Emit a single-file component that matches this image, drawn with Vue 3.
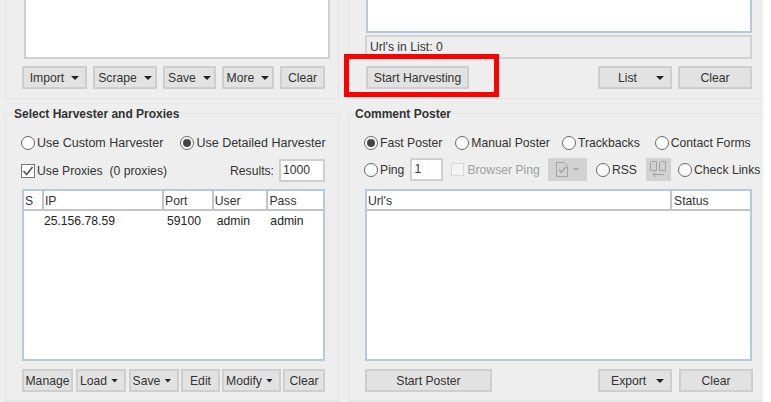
<template>
  <div class="screen">
    <div class="columns">
      <div class="col left">
        <section class="panel top-panel">
          <div class="list-box import-box"></div>
          <div class="btn-row import-row">
            <button v-for="b in importButtons" :key="b.label" class="btn" :style="{ width: b.width + 'px' }">
              <span>{{ b.label }}</span><i v-if="b.menu" class="caret"></i>
            </button>
          </div>
        </section>
        <section class="panel titled">
          <h4>Select Harvester and Proxies</h4>
          <div class="row radios-left">
            <label class="radio"><i class="dot"></i>Use Custom Harvester</label>
            <label class="radio"><i class="dot on"></i>Use Detailed Harvester</label>
          </div>
          <div class="row proxies-row">
            <label class="radio">
              <svg class="check" width="14" height="14" viewBox="0 0 14 14">
                <rect x="0.5" y="0.5" width="13" height="13" fill="#fff" stroke="#777" />
                <path d="M2.5 7 L5.7 10.5 L11.5 3" fill="none" stroke="#555" stroke-width="1.6" />
              </svg>
              Use Proxies&nbsp; (0 proxies)
            </label>
            <span class="results">Results:<span class="field wide">1000</span></span>
          </div>
          <div class="table proxies">
            <div class="thead">
              <span v-for="c in proxyCols" :key="c.name" :style="{ width: c.width + 'px' }">{{ c.name }}</span>
            </div>
            <div class="trow">
              <span v-for="c in proxyCols" :key="c.name" :style="{ width: c.width + 'px' }">{{ c.value }}</span>
            </div>
          </div>
          <div class="btn-row proxy-buttons">
            <button
              v-for="b in proxyButtons"
              :key="b.label"
              class="btn tight"
              :class="{ 'has-menu': b.menu }"
              :style="{ width: b.width + 'px' }"
            >
              <span>{{ b.label }}</span><i v-if="b.menu" class="caret-small"></i>
            </button>
          </div>
        </section>
      </div>

      <div class="col right">
        <section class="panel top-panel">
          <div class="list-box urls-box"></div>
          <div class="count-box">Url's in List: 0</div>
          <div class="btn-row harvest-row">
            <button class="btn harvest">Start Harvesting</button>
            <div class="push"></div>
            <button class="btn menu-btn list-btn"><span>List</span><i class="caret"></i></button>
            <button class="btn wide-clear">Clear</button>
          </div>
        </section>
        <section class="panel titled">
          <h4>Comment Poster</h4>
          <div class="row poster-modes">
            <label class="radio fast"><i class="dot on"></i>Fast Poster</label>
            <label class="radio"><i class="dot"></i>Manual Poster</label>
            <label class="radio"><i class="dot"></i>Trackbacks</label>
            <label class="radio contact"><i class="dot"></i>Contact Forms</label>
          </div>
          <div class="row ping-row">
            <label class="radio ping"><i class="dot"></i>Ping</label>
            <span class="field ping-field">1</span>
            <label class="radio disabled"><i class="box"></i>Browser Ping</label>
            <span class="icon-btn doc-btn">
              <svg width="12" height="15" viewBox="0 0 12 15">
                <path d="M0.5 0.5 H8 L11.5 4 V14.5 H0.5 Z" fill="none" stroke="#a3a3a3" />
                <path d="M3 7.5 L5.5 10.5 L10 4.5" fill="none" stroke="#a3a3a3" stroke-width="1.3" />
              </svg>
              <i class="caret pale"></i>
            </span>
            <label class="radio"><i class="dot"></i>RSS</label>
            <span class="icon-btn swap-btn">
              <svg width="16" height="17" viewBox="0 0 16 17">
                <path d="M0.5 9.5 V2 L2 0.5 H6.5 V9.5 Z M9.5 9.5 V2 L11 0.5 H15.5 V9.5 Z" fill="none" stroke="#a3a3a3" />
                <path d="M14 13.5 H3 M5.5 11 L3 13.5 L5.5 16" fill="none" stroke="#a3a3a3" />
              </svg>
            </span>
            <label class="radio"><i class="dot"></i>Check Links</label>
          </div>
          <div class="table urls">
            <div class="thead">
              <span class="url-col">Url's</span>
              <span class="status-col">Status</span>
            </div>
          </div>
          <div class="btn-row poster-buttons">
            <button class="btn start-poster">Start Poster</button>
            <div class="push"></div>
            <button class="btn menu-btn"><span>Export</span><i class="caret"></i></button>
            <button class="btn wide-clear">Clear</button>
          </div>
        </section>
      </div>
    </div>
    <div class="highlight"></div>
  </div>
</template>

<script setup>
const importButtons = [
  { label: 'Import', width: 65, menu: true },
  { label: 'Scrape', width: 64, menu: true },
  { label: 'Save', width: 53, menu: true },
  { label: 'More', width: 52, menu: true },
  { label: 'Clear', width: 45 },
]

const proxyButtons = [
  { label: 'Manage', width: 51 },
  { label: 'Load', width: 50, menu: true },
  { label: 'Save', width: 50, menu: true },
  { label: 'Edit', width: 39 },
  { label: 'Modify', width: 59, menu: true },
  { label: 'Clear', width: 42 },
]

const proxyCols = [
  { name: 'S', value: '', width: 20 },
  { name: 'IP', value: '25.156.78.59', width: 121 },
  { name: 'Port', value: '59100', width: 50 },
  { name: 'User', value: 'admin', width: 55 },
  { name: 'Pass', value: 'admin', width: 55 },
]
</script>

<style scoped>
.screen {
  position: relative;
  width: 771px;
  height: 402px;
  overflow: hidden;
  background: #fff;
  font-family: "Liberation Sans", Arial, sans-serif;
  font-size: 12.2px;
  color: #333;
}
.columns {
  display: flex;
  width: 763px;
  height: 402px;
  padding-left: 5px;
  box-sizing: border-box;
  background: #eeeeee;
}
.col {
  display: flex;
  flex-direction: column;
}
.left {
  width: 334px;
  margin-right: 9px;
}
.right {
  width: 415px;
}
.panel {
  border: 1px solid #e4e4e4;
  box-sizing: border-box;
}
.right .panel {
  border-right: 0;
}
.top-panel {
  height: 99px;
  border-top: 0;
  flex: none;
}
.titled {
  position: relative;
  margin-top: 14px;
  height: 288px;
}
h4 {
  position: absolute;
  top: -7px;
  left: 7px;
  margin: 0;
  padding: 0 1px;
  background: #eeeeee;
  font-size: 12px;
  line-height: 14px;
  font-weight: bold;
  color: #333;
}
.right h4 {
  left: 5px;
}
.list-box {
  background: #fff;
  box-sizing: border-box;
  border: 2px solid #d0d0d0;
  border-top: 0;
}
.import-box {
  width: 306px;
  height: 59px;
  margin-left: 18px;
}
.urls-box {
  width: 386px;
  height: 33px;
  margin-left: 17px;
  border-color: #b7c9de;
}
.count-box {
  width: 387px;
  height: 24px;
  margin: 2px 0 0 16px;
  padding-left: 3px;
  box-sizing: border-box;
  border: 2px solid #d2d2d2;
  line-height: 20px;
}
.btn-row {
  display: flex;
}
.import-row {
  gap: 6px;
  margin: 7px 0 0 16px;
}
.harvest-row {
  gap: 6px;
  margin: 7px 0 0 17px;
  width: 386px;
}
.push {
  flex: 1;
}
.btn {
  display: flex;
  align-items: center;
  justify-content: center;
  gap: 7px;
  height: 23px;
  padding: 0;
  box-sizing: border-box;
  border: 2px solid #cecece;
  background: #e2e2e2;
  font: inherit;
  color: #333;
}
.btn.tight {
  gap: 4px;
}
.btn.has-menu {
  padding-right: 4px;
}
.harvest {
  width: 103px;
}
.menu-btn {
  justify-content: space-between;
  width: 74px;
  padding: 0 6px 0 11px;
}
.list-btn {
  padding-left: 18px;
}
.wide-clear {
  width: 74px;
}
.caret {
  display: block;
  width: 0;
  height: 0;
  border-left: 4px solid transparent;
  border-right: 4px solid transparent;
  border-top: 4px solid #222;
}
.caret-small {
  display: block;
  width: 7px;
  height: 4px;
  background: #222;
  clip-path: polygon(0 0, 100% 0, 50% 100%);
}
.caret.pale {
  border-left-width: 3px;
  border-right-width: 3px;
  border-top: 3px solid #a8a8a8;
}
.row {
  display: flex;
  align-items: center;
}
.radio {
  display: flex;
  align-items: center;
  gap: 2px;
  white-space: nowrap;
}
.radio.disabled {
  color: #a0a0a0;
  gap: 3px;
}
.dot {
  display: block;
  position: relative;
  width: 14px;
  height: 14px;
  box-sizing: border-box;
  border: 1px solid #666;
  border-radius: 50%;
  background: #fff;
}
.dot.on::after {
  content: "";
  position: absolute;
  left: 2px;
  top: 2px;
  width: 8px;
  height: 8px;
  border-radius: 50%;
  background: #444;
}
.box {
  display: block;
  width: 13px;
  height: 13px;
  box-sizing: border-box;
  border: 1px solid #d8d8d8;
  background: #f4f4f4;
}
.check {
  display: block;
}
.radios-left {
  gap: 17px;
  margin: 22px 0 0 15px;
  height: 14px;
  font-size: 12.5px;
}
.proxies-row {
  justify-content: space-between;
  width: 304px;
  margin: 9px 0 0 15px;
  height: 23px;
}
.results {
  display: flex;
  align-items: center;
  gap: 5px;
}
.field {
  display: block;
  height: 23px;
  box-sizing: border-box;
  border: 2px solid #cfcfcf;
  background: #fff;
  line-height: 19px;
  padding-left: 2px;
}
.field.wide {
  width: 46px;
}
.table {
  background: #fff;
  box-sizing: border-box;
  border: 2px solid #b7c9de;
}
.proxies {
  width: 303px;
  height: 172px;
  margin: 7px 0 0 16px;
}
.urls {
  width: 387px;
  height: 172px;
  margin: 8px 0 0 16px;
}
.thead {
  display: flex;
  height: 18px;
  border-bottom: 2px solid #c4c4c4;
  box-sizing: content-box;
  line-height: 20px;
}
.thead span {
  box-sizing: border-box;
  border-right: 2px solid #c4c4c4;
  padding-left: 1px;
}
.thead span:last-child {
  border-right: 0;
}
.url-col {
  width: 305px;
}
.thead .status-col {
  flex: 1;
  padding-left: 2px;
}
.trow {
  display: flex;
  height: 20px;
  line-height: 20px;
  color: #222;
}
.trow span {
  padding-left: 3px;
  box-sizing: border-box;
}
.trow span:nth-child(2) {
  padding-left: 0;
}
.trow span:last-child {
  padding-left: 2px;
}
.proxy-buttons {
  gap: 2px;
  margin: 8px 0 0 16px;
}
.proxy-buttons .btn:nth-child(-n+2) {
  margin-right: 1px;
}
.poster-buttons {
  gap: 7px;
  width: 388px;
  margin: 8px 0 0 16px;
}
.start-poster {
  width: 127px;
}
.poster-modes {
  margin: 22px 0 0 15px;
  height: 14px;
  gap: 12px;
}
.fast {
  margin-right: 1px;
}
.contact {
  margin-left: 3px;
}
.ping-row {
  margin: 8px 0 0 15px;
  height: 23px;
  gap: 8px;
}
.ping {
  margin-right: -2px;
}
.ping-field {
  width: 33px;
}
.icon-btn {
  display: flex;
  align-items: center;
  justify-content: center;
  gap: 5px;
  height: 23px;
  background: #d2d2d2;
}
.doc-btn {
  width: 39px;
  margin-right: 1px;
}
.swap-btn {
  width: 25px;
  margin: 0 -1px 0 1px;
}
.highlight {
  position: absolute;
  left: 344px;
  top: 54px;
  width: 155px;
  height: 43px;
  box-sizing: border-box;
  border: 5px solid #ff0000;
}
</style>
